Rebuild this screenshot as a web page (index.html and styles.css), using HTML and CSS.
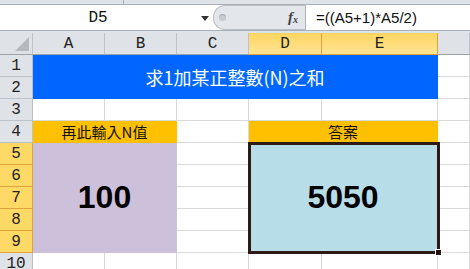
FILE: index.html
```html
<!DOCTYPE html>
<html lang="zh-Hant">

<head>
    <meta charset="UTF-8">
    <meta name="viewport" content="width=device-width, initial-scale=1.0">
    <link rel="stylesheet" href="styles.css">
</head>

<body>
    <div class="ribbon-edge">
        <div class="ribbon-split"></div>
    </div>

    <div class="formula-bar">
        <div class="name-box">
            <span class="name-text">D5</span>
            <svg class="name-arrow" width="8" height="5" viewBox="0 0 8 5"><path d="M0 0 H8 L4 5 Z" fill="#333"/></svg>
        </div>
        <div class="fx-area">
            <span class="grip"></span>
            <span class="fx">f<sub>x</sub></span>
        </div>
        <div class="formula-input">=((A5+1)*A5/2)</div>
    </div>

    <div class="sheet">
        <!-- header row -->
        <div class="corner">
            <svg width="14" height="14" viewBox="0 0 14 14"><path d="M14 0 V14 H0 Z" fill="#b5b9be"/></svg>
        </div>
        <div class="col-head">A</div>
        <div class="col-head">B</div>
        <div class="col-head">C</div>
        <div class="col-head active">D</div>
        <div class="col-head active">E</div>
        <div class="col-head"></div>

        <!-- rows 1-2 -->
        <div class="row-head">1</div>
        <div class="cell title">求1加某正整數(N)之和</div>
        <div class="cell"></div>
        <div class="row-head">2</div>
        <div class="cell"></div>

        <!-- row 3 -->
        <div class="row-head">3</div>
        <div class="cell"></div>
        <div class="cell"></div>
        <div class="cell"></div>
        <div class="cell"></div>
        <div class="cell"></div>
        <div class="cell"></div>

        <!-- row 4 -->
        <div class="row-head">4</div>
        <div class="cell label">再此輸入N值</div>
        <div class="cell"></div>
        <div class="cell label">答案</div>
        <div class="cell"></div>

        <!-- rows 5-9 -->
        <div class="row-head active">5</div>
        <div class="cell input-value">100</div>
        <div class="cell"></div>
        <div class="cell answer selected">5050</div>
        <div class="cell"></div>
        <div class="row-head active">6</div>
        <div class="cell"></div>
        <div class="cell"></div>
        <div class="row-head active">7</div>
        <div class="cell"></div>
        <div class="cell"></div>
        <div class="row-head active">8</div>
        <div class="cell"></div>
        <div class="cell"></div>
        <div class="row-head active">9</div>
        <div class="cell"></div>
        <div class="cell"></div>

        <!-- row 10 -->
        <div class="row-head">10</div>
        <div class="cell"></div>
        <div class="cell"></div>
        <div class="cell"></div>
        <div class="cell"></div>
        <div class="cell"></div>
        <div class="cell"></div>
    </div>
</body>

</html>
```

FILE: styles.css
```css
body {
    margin: 0;
    width: 470px;
    height: 269px;
    overflow: hidden;
    background-color: #dfe3e8;
    font-family: 'Liberation Sans', Arial, sans-serif;
}

.ribbon-edge {
    height: 4px;
    border-bottom: 1px solid #a9b0b8;
}

.ribbon-split {
    width: 1px;
    height: 4px;
    margin-left: 123px;
    background-color: #a9b0b8;
}

.formula-bar {
    display: flex;
    height: 25px;
    border-bottom: 1px solid #a9b0b8;
    margin-bottom: 2px;
    background-color: #fff;
}

.name-box {
    width: 213px;
    display: flex;
    align-items: center;
}

.name-text {
    width: 196px;
    text-align: center;
    font-family: 'Liberation Mono', 'Courier New', monospace;
    font-size: 16px;
    color: #111;
}

.name-arrow {
    margin-left: 5px;
    margin-top: 2px;
}

.fx-area {
    width: 93px;
    display: flex;
    align-items: center;
    background-color: #e3e6ea;
    border: 1px solid #b8bdc4;
    border-right: 1px solid #a9b0b8;
    border-radius: 12px 0 0 12px;
    box-sizing: border-box;
}

.grip {
    width: 7px;
    height: 7px;
    margin-left: 5px;
    border-radius: 50%;
    background-color: #c8ccd1;
    box-shadow: inset 0 1px 1px #a4a9b0;
}

.fx {
    margin-left: auto;
    margin-right: 7px;
    font-family: 'Liberation Serif', 'Times New Roman', serif;
    font-style: italic;
    font-weight: bold;
    font-size: 15px;
    color: #444;
}

.fx sub {
    font-size: 10px;
    vertical-align: -1px;
}

.formula-input {
    flex: 1;
    display: flex;
    align-items: center;
    padding-left: 10px;
    font-size: 15px;
    color: #111;
}

.sheet {
    display: grid;
    grid-template-columns: 33px 72px 72px 72px 73px 116px 1fr;
    grid-auto-rows: 22px;
    background-color: #fff;
}

.sheet > div {
    box-sizing: border-box;
}

.corner,
.col-head,
.row-head {
    background-color: #dfe3e8;
    border-right: 1px solid #bcc2c9;
    border-bottom: 1px solid #bcc2c9;
    font-family: 'Liberation Mono', 'Courier New', monospace;
    font-size: 16px;
    color: #222;
    display: flex;
    align-items: center;
    justify-content: center;
}

.corner {
    align-items: flex-end;
    justify-content: flex-end;
    padding: 0 3px 3px 0;
}

.corner,
.col-head {
    border-bottom-color: #9ca3ab;
}

.col-head.active {
    background: linear-gradient(#ffd560, #ffe495);
    border-right-color: #e1a23b;
    border-bottom-color: #e1a23b;
}

.row-head.active {
    background-color: #ffd966;
    border-right-color: #e1a23b;
    border-bottom-color: #e1a23b;
}

.cell {
    border-right: 1px solid #d9d9d9;
    border-bottom: 1px solid #d9d9d9;
}

.title {
    grid-column: span 5;
    grid-row: span 2;
    background-color: #0066ff;
    border-color: #0066ff;
    color: #fff;
    font-family: 'Noto Sans CJK TC', 'Liberation Sans', sans-serif;
    font-size: 18px;
    display: flex;
    align-items: center;
    justify-content: center;
}

.label {
    grid-column: span 2;
    background-color: #ffc000;
    border-color: #ffc000;
    color: #111;
    font-family: 'Noto Sans CJK TC', 'Liberation Sans', sans-serif;
    font-size: 15px;
    display: flex;
    align-items: center;
    justify-content: center;
}

.input-value,
.answer {
    grid-column: span 2;
    grid-row: span 5;
    font-size: 32px;
    font-weight: bold;
    color: #000;
    display: flex;
    align-items: center;
    justify-content: center;
}

.input-value {
    background-color: #ccc0da;
    border-color: #ccc0da;
}

.answer {
    background-color: #b7dde8;
    border-color: #b7dde8;
}

.selected {
    position: relative;
}

.selected::after {
    content: '';
    position: absolute;
    top: -1px;
    left: -1px;
    right: -3px;
    bottom: -2px;
    border: 3px solid #2d1a16;
}

.selected::before {
    content: '';
    position: absolute;
    right: -5px;
    bottom: -4px;
    width: 5px;
    height: 5px;
    background-color: #1f120f;
    border: 1px solid #fff;
    z-index: 1;
}
```
